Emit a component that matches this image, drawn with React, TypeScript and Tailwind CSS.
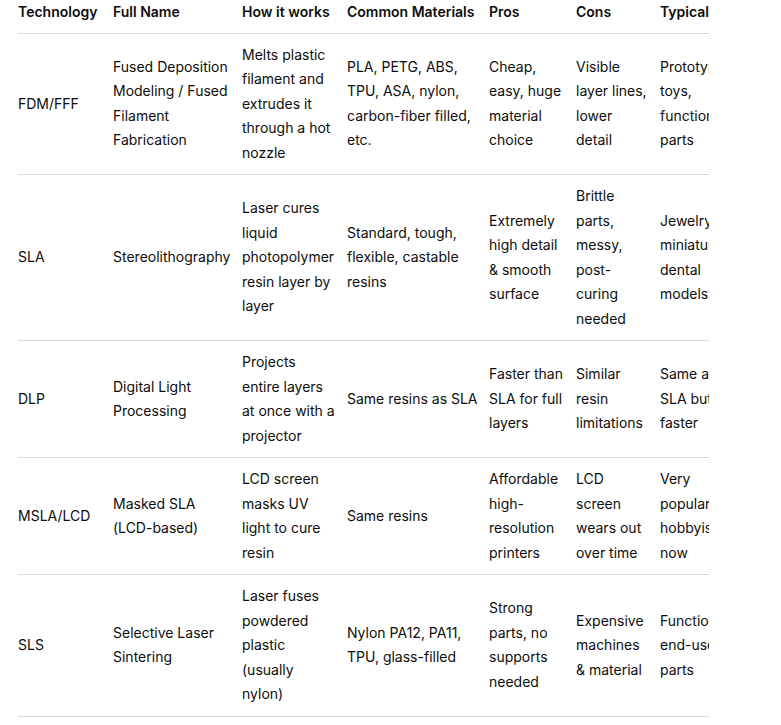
const columns = [
  { label: "Technology", width: "w-[95px]", pad: "pr-2" },
  { label: "Full Name", width: "w-[129px]", pad: "pr-2" },
  { label: "How it works", width: "w-[105px]", pad: "pr-[11px]" },
  { label: "Common Materials", width: "w-[142px]", pad: "pr-2" },
  { label: "Pros", width: "w-[87px]", pad: "pr-2" },
  { label: "Cons", width: "w-[84px]", pad: "pr-2" },
  { label: "Typical Use", width: "w-[90px]", pad: "pr-3" },
];

const rows: string[][] = [
  [
    "FDM/FFF",
    "Fused Deposition Modeling / Fused Filament Fabrication",
    "Melts plastic filament and extrudes it through a hot nozzle",
    "PLA, PETG, ABS, TPU, ASA, nylon, carbon-fiber filled, etc.",
    "Cheap, easy, huge material choice",
    "Visible layer lines, lower detail",
    "Prototypes, toys, functional parts",
  ],
  [
    "SLA",
    "Stereolithography",
    "Laser cures liquid photopolymer resin layer by layer",
    "Standard, tough, flexible, castable resins",
    "Extremely high detail & smooth surface",
    "Brittle parts, messy, post-curing needed",
    "Jewelry, miniatures, dental models",
  ],
  [
    "DLP",
    "Digital Light Processing",
    "Projects entire layers at once with a projector",
    "Same resins as SLA",
    "Faster than SLA for full layers",
    "Similar resin limitations",
    "Same as SLA but faster",
  ],
  [
    "MSLA/LCD",
    "Masked SLA (LCD-based)",
    "LCD screen masks UV light to cure resin",
    "Same resins",
    "Affordable high-resolution printers",
    "LCD screen wears out over time",
    "Very popular hobbyist now",
  ],
  [
    "SLS",
    "Selective Laser Sintering",
    "Laser fuses powdered plastic (usually nylon)",
    "Nylon PA12, PA11, TPU, glass-filled",
    "Strong parts, no supports needed",
    "Expensive machines & material",
    "Functional end-use parts",
  ],
];

export default function App() {
  return (
    <div className="min-h-screen bg-white pl-[18px] font-['Inter','Noto_Sans',sans-serif] text-[14px] leading-[24.5px] text-[#0d0d0d]">
      <div className="w-[691px] overflow-hidden">
        <table className="table-fixed border-collapse text-left w-[732px]">
          <thead>
            <tr className="border-b border-[#d5dbe0]">
              {columns.map((c) => (
                <th key={c.label} className={`${c.width} ${c.pad} pt-0 pb-[8px] font-semibold align-middle whitespace-nowrap`}>
                  {c.label}
                </th>
              ))}
            </tr>
          </thead>
          <tbody>
            {rows.map((r) => (
              <tr key={r[0]} className="border-b border-[#d5dbe0]">
                {r.map((cell, i) => (
                  <td key={i} className={`${columns[i].pad} py-[9px] align-middle`}>
                    {cell}
                  </td>
                ))}
              </tr>
            ))}
          </tbody>
        </table>
      </div>
    </div>
  );
}
